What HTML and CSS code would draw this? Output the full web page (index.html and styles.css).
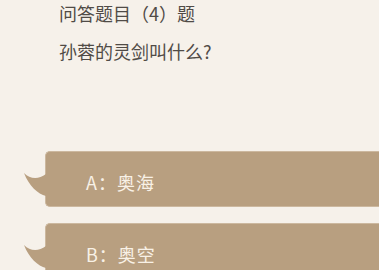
FILE: index.html
```html
<!DOCTYPE html>
<html lang="zh">
<head>
<meta charset="utf-8">
<link rel="stylesheet" href="styles.css">
</head>
<body>
<div class="page">
  <div class="question">
    <div class="q-title">问答题目（4）题</div>
    <div class="q-text">孙蓉的灵剑叫什么?</div>
  </div>
  <div class="options">
    <div class="bubble">
      <svg class="tail" width="22" height="28" viewBox="0 0 22 28"><path d="M0,3 C6,9 14,10 22,4 L22,26 C14,24 5,16 0,3 Z" fill="#b89f80"/></svg>
      <span class="label">A：奥海</span>
    </div>
    <div class="bubble">
      <svg class="tail" width="22" height="28" viewBox="0 0 22 28"><path d="M0,3 C6,9 14,10 22,4 L22,26 C14,24 5,16 0,3 Z" fill="#b89f80"/></svg>
      <span class="label">B：奥空</span>
    </div>
  </div>
</div>
</body>
</html>
```
FILE: styles.css
```css
html, body {
  margin: 0;
  padding: 0;
  background: #f6f1ea;
}
.page {
  width: 379px;
  height: 270px;
  overflow: hidden;
  font-family: "Noto Sans CJK SC", "Noto Sans", sans-serif;
}
.question {
  padding-left: 59px;
  color: #504b46;
  font-size: 18px;
  line-height: 26px;
}
.q-text {
  margin-top: 12px;
}
.options {
  margin-top: 87px;
  padding-left: 45px;
  display: flex;
  flex-direction: column;
  gap: 16px;
}
.bubble {
  position: relative;
  height: 56px;
  box-sizing: border-box;
  background: #b89f80;
  border: 1px solid #ccb89f;
  border-right: none;
  border-radius: 5px 0 0 5px;
  display: flex;
  align-items: center;
  padding: 5px 0 0 40px;
}
.tail {
  position: absolute;
  left: -22px;
  top: 18px;
}
.label {
  color: #f8f1e6;
  font-size: 18px;
  line-height: 24px;
  letter-spacing: 1px;
}
```
